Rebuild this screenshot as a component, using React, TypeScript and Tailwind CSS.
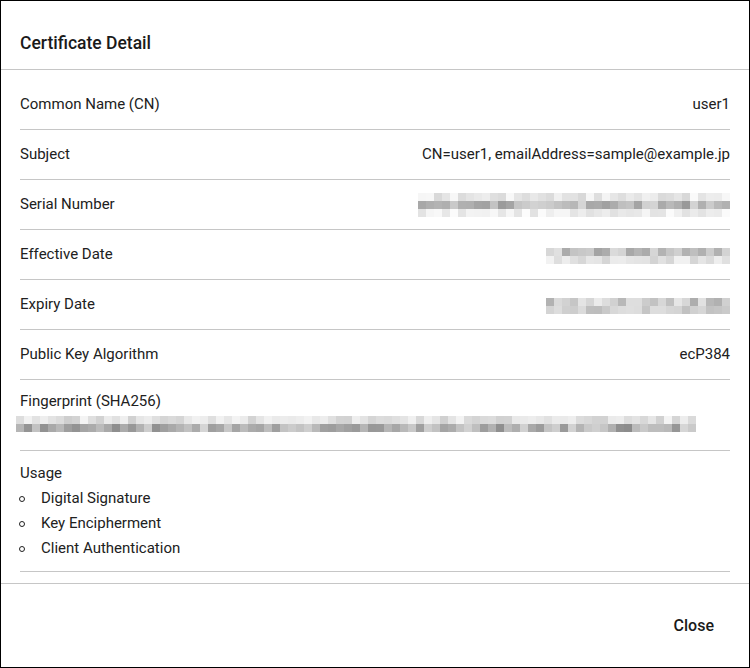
import React from "react";

type MosaicProps = {
  cols: number;
  rows: [number, number][]; // lightness range per row, 0-255
  seed: number;
  className?: string;
};

// masked value: a small grid of grey cells standing in for hidden text
function Mosaic({ cols, rows, seed, className }: MosaicProps) {
  let s = seed;
  const rand = () => {
    s = (s * 9301 + 49297) % 233280;
    return s / 233280;
  };
  return (
    <div className={`flex flex-col ${className ?? ""}`}>
      {rows.map(([lo, hi], r) => (
        <div key={r} className="flex">
          {Array.from({ length: cols }).map((_, c) => {
            const v = Math.round(lo + (hi - lo) * rand());
            return (
              <div
                key={c}
                className="h-[8px] w-[8px]"
                style={{ backgroundColor: `rgb(${v},${v},${v})` }}
              />
            );
          })}
        </div>
      ))}
    </div>
  );
}

type RowProps = {
  label: string;
  children: React.ReactNode;
};

function DetailRow({ label, children }: RowProps) {
  return (
    <div className="flex h-[50px] items-center justify-between border-b border-[#c6c6c6]">
      <span>{label}</span>
      {children}
    </div>
  );
}

const usages = ["Digital Signature", "Key Encipherment", "Client Authentication"];

export default function App() {
  return (
    <div
      className="flex h-[668px] w-[750px] flex-col border border-black bg-white text-[15px] text-[#212121]"
      style={{ fontFamily: "Roboto, 'Liberation Sans', sans-serif" }}
    >
      <header className="flex h-[69px] shrink-0 items-center border-b border-[#c6c6c6] px-[19px] pt-[16px]">
        <h2 className="text-[17.5px] font-medium text-[#1a1a1a]">Certificate Detail</h2>
      </header>

      <main className="flex-1 overflow-hidden px-[19px] pt-[10px]">
        <DetailRow label="Common Name (CN)">
          <span>user1</span>
        </DetailRow>
        <DetailRow label="Subject">
          <span>CN=user1, emailAddress=sample@example.jp</span>
        </DetailRow>
        <DetailRow label="Serial Number">
          <Mosaic
            cols={39}
            seed={17}
            rows={[
              [215, 250],
              [150, 215],
              [225, 252],
            ]}
          />
        </DetailRow>
        <DetailRow label="Effective Date">
          <Mosaic
            cols={23}
            seed={41}
            className="mt-[2px]"
            rows={[
              [160, 225],
              [210, 245],
            ]}
          />
        </DetailRow>
        <DetailRow label="Expiry Date">
          <Mosaic
            cols={23}
            seed={73}
            className="mt-[2px]"
            rows={[
              [170, 235],
              [185, 225],
            ]}
          />
        </DetailRow>
        <DetailRow label="Public Key Algorithm">
          <span>ecP384</span>
        </DetailRow>

        <div className="h-[71px] border-b border-[#c6c6c6] pt-[10px]">
          <div className="leading-[22px]">Fingerprint (SHA256)</div>
          <Mosaic
            cols={85}
            seed={5}
            className="ml-[-4px] mt-[4px]"
            rows={[
              [205, 245],
              [140, 215],
            ]}
          />
        </div>

        <div className="border-b border-[#c6c6c6] pb-[10px] pt-[10px] leading-[25px]">
          <div>Usage</div>
          <ul>
            {usages.map((u) => (
              <li key={u} className="flex items-center">
                <span className="ml-[-1px] mr-[16px] h-[6px] w-[6px] rounded-full border border-[#212121]" />
                <span>{u}</span>
              </li>
            ))}
          </ul>
        </div>
      </main>

      <footer className="flex h-[84px] shrink-0 items-center justify-end border-t border-[#c6c6c6] pr-[27px]">
        <button className="rounded px-2 py-1.5 text-[16px] font-medium text-[#1a1a1a]">
          Close
        </button>
      </footer>
    </div>
  );
}
